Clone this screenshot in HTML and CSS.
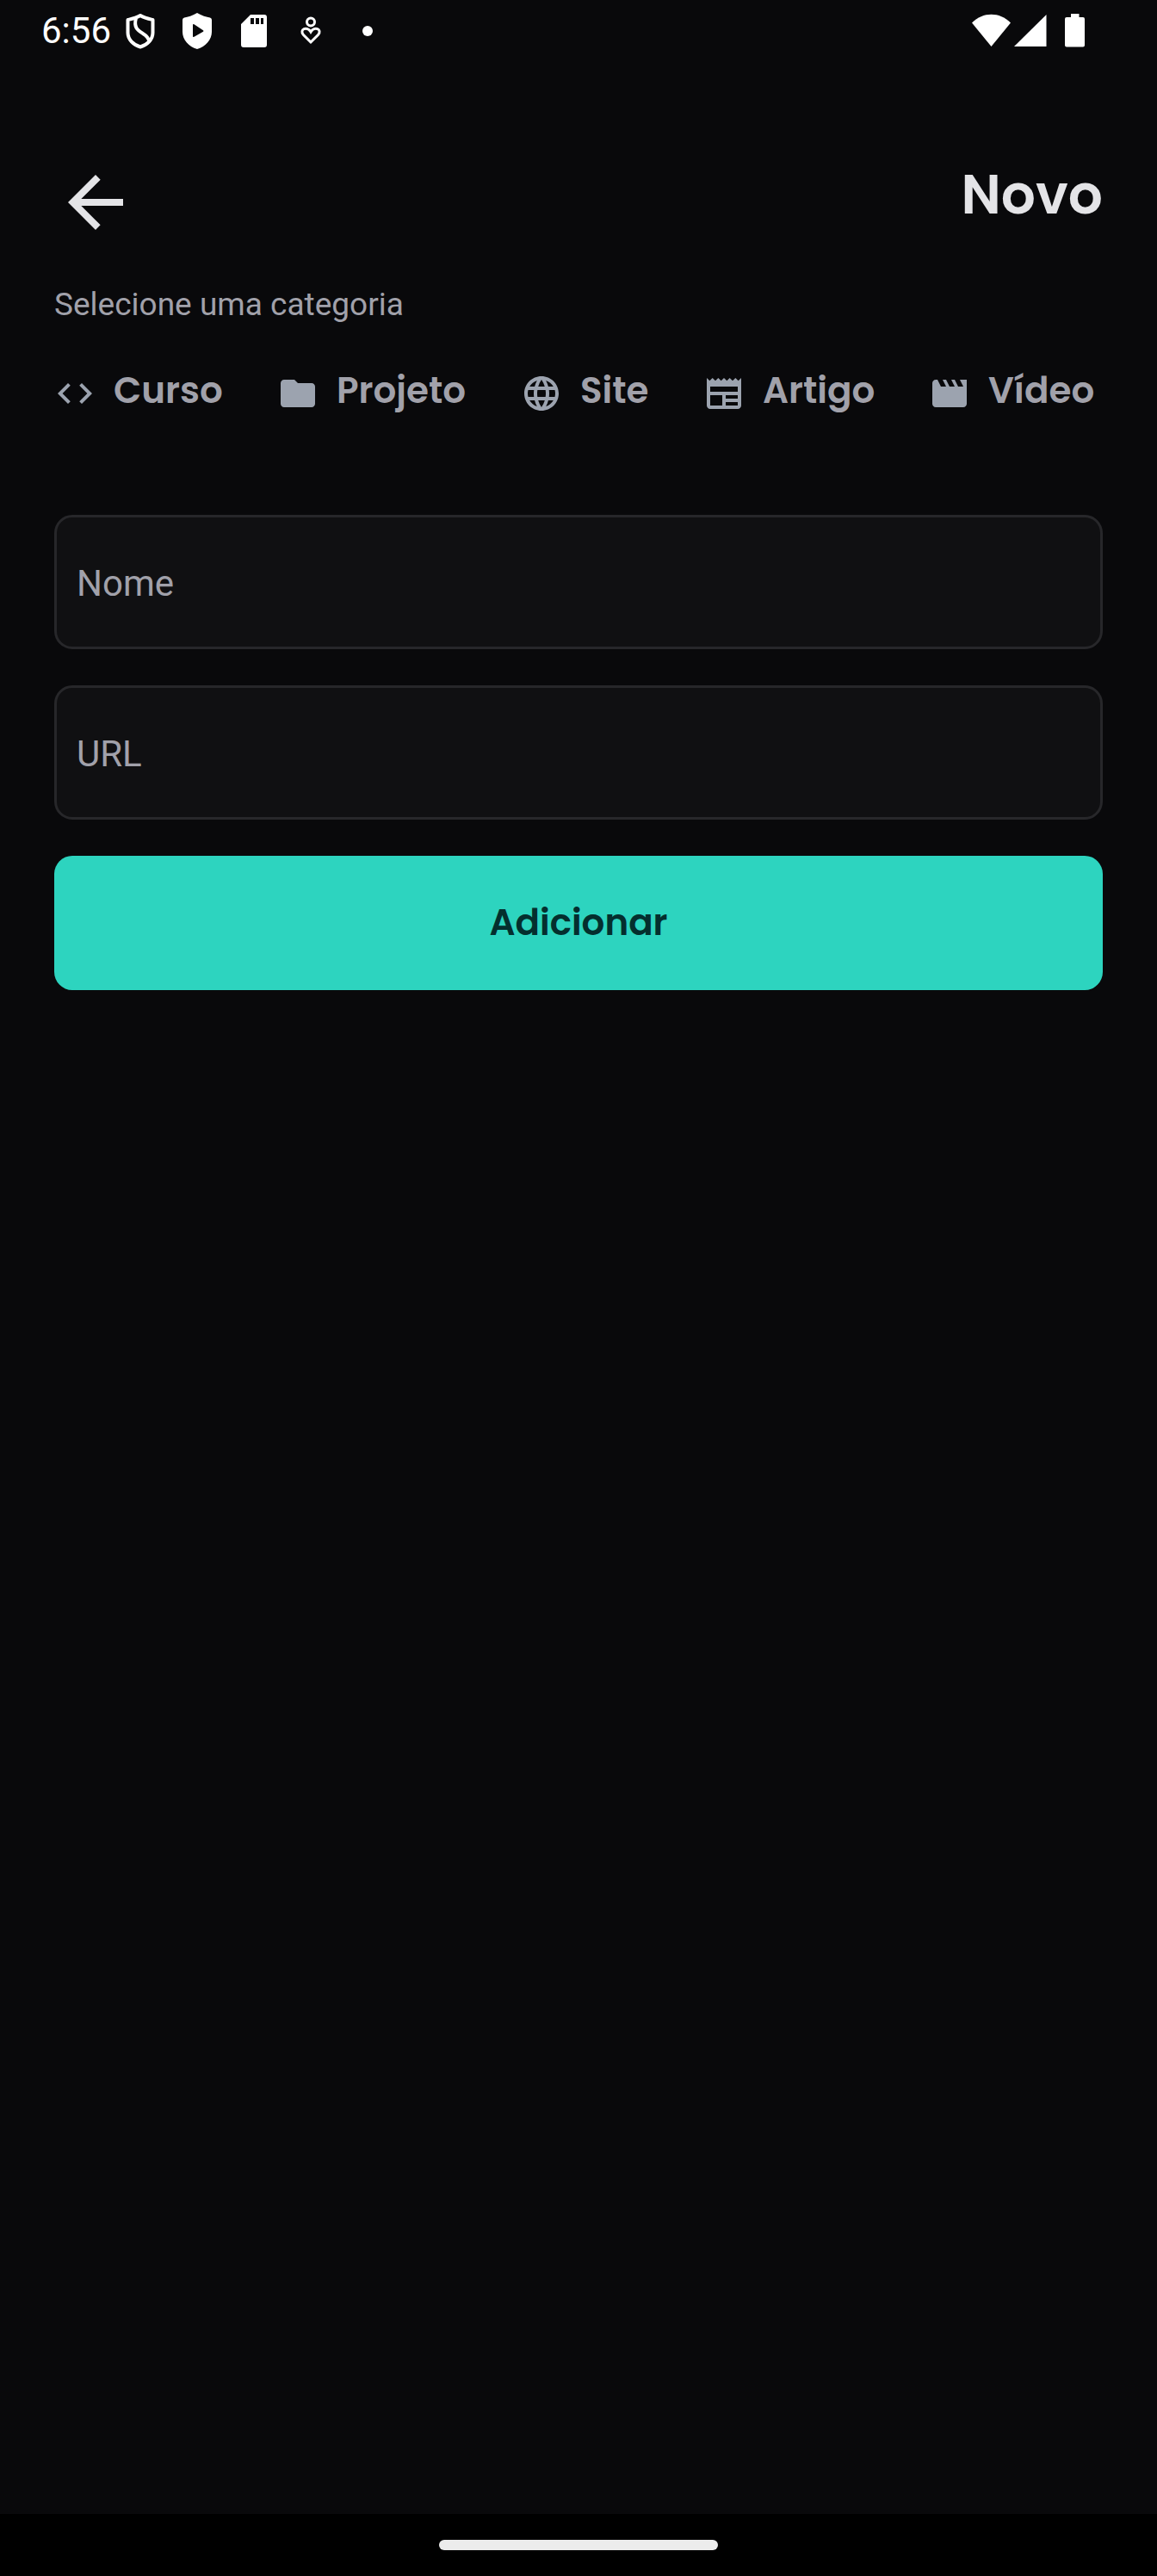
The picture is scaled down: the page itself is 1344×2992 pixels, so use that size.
FILE: index.html
```html
<!DOCTYPE html>
<html lang="pt-BR">
<head>
<meta charset="utf-8">
<meta name="viewport" content="width=device-width, initial-scale=1">
<title>Novo</title>
<link rel="stylesheet" href="styles.css">
</head>
<body>
<div class="status">
  <div class="status-left">
    <time class="clock">6:56</time>
    <div class="status-icons">
      <svg class="icon" viewBox="0 0 48 48" fill="none" stroke="#fff" stroke-width="4" stroke-linejoin="round"><path d="M24 6C19 9 14 10 9.500 11V26C9.500 34 16 40 24 42.500C32 40 38.500 34 38.500 26V11C34 10 29 9 24 6Z"/><path d="M19 9C16 20 21 23 27 27C32 30 34 33 34.500 37"/></svg>
      <svg class="icon" viewBox="0 0 48 48"><path fill="#fff" d="M24 3C19 6 13 8 9 8.500Q7 9 7 11V25C7 34 14 42 24 45C34 42 41 34 41 25V11Q41 9 39 8.500C35 8 29 6 24 3Z"/><path fill="#09090b" d="M19 17V30Q19 31.500 20.500 30.700L31 24.700Q32 24 31 23.200L20.500 16.300Q19 15.500 19 17Z"/></svg>
      <svg class="icon" viewBox="0 0 48 48"><path fill="#fff" fill-rule="evenodd" d="M20 5H36Q39 5 39 8V40Q39 43 36 43H12Q9 43 9 40V16ZM20 9V16H24V9ZM26 9V16H30V9ZM32 9V16H35V9Z"/></svg>
      <svg class="icon" viewBox="0 0 48 48" fill="none" stroke="#fff" stroke-width="3"><circle cx="24" cy="13.500" r="4.500"/><path d="M24 37L15.500 28.500C10 22 20 18 24 25C28 18 38 22 32.500 28.500Z"/></svg>
      <svg class="icon" viewBox="0 0 48 48"><circle cx="24" cy="24" r="6" fill="#fff"/></svg>
    </div>
  </div>
  <svg class="signals" viewBox="0 0 132 48" fill="#fff"><path d="M1 14.500C14 1.500 33 1.500 46 14.500L23.500 42Z"/><path d="M50 42L87.500 5V42Z"/><path d="M116 4H125.500V8H130Q132 8 132 10V40.500Q132 42.500 130 42.500H111Q109 42.500 109 40.500V10Q109 8 111 8H116Z"/></svg>
</div>

<main class="screen">
  <header class="header">
    <button class="back" type="button" aria-label="Voltar">
      <svg viewBox="0 0 24 24"><path d="M20 11H7.830l5.590-5.590L12 4l-8 8 8 8 1.410-1.410L7.830 13H20z"/></svg>
    </button>
    <h1 class="title">Novo</h1>
  </header>

  <p class="hint">Selecione uma categoria</p>
  <div class="categories">
    <button class="category" type="button">
      <svg class="icon" viewBox="0 0 24 24"><path d="M9.400 16.600 4.800 12l4.600-4.600L8 6l-6 6 6 6zm5.200 0 4.600-4.600-4.600-4.600L16 6l6 6-6 6z"/></svg>Curso</button>
    <button class="category" type="button">
      <svg class="icon" viewBox="0 0 24 24"><path d="M10 4H4c-1.100 0-1.990.9-1.990 2L2 18c0 1.100.9 2 2 2h16c1.100 0 2-.9 2-2V8c0-1.100-.9-2-2-2h-8z"/></svg>Projeto</button>
    <button class="category" type="button">
      <svg class="icon" viewBox="0 0 24 24"><path d="M11.990 2C6.470 2 2 6.480 2 12s4.470 10 9.990 10C17.520 22 22 17.520 22 12S17.520 2 11.990 2m6.930 6h-2.950c-.32-1.250-.78-2.450-1.380-3.560 1.840.63 3.370 1.910 4.330 3.560M12 4.040c.83 1.200 1.480 2.530 1.910 3.960h-3.820c.43-1.430 1.080-2.760 1.910-3.960M4.260 14C4.100 13.360 4 12.690 4 12s.1-1.360.26-2h3.380c-.08.66-.14 1.320-.14 2s.06 1.340.14 2zm.82 2h2.950c.32 1.250.78 2.450 1.380 3.560-1.840-.63-3.370-1.900-4.330-3.560m2.950-8H5.080c.96-1.660 2.490-2.930 4.330-3.560C8.810 5.550 8.350 6.750 8.030 8M12 19.960c-.83-1.200-1.480-2.530-1.910-3.960h3.820c-.43 1.430-1.080 2.760-1.910 3.960M14.340 14H9.660c-.09-.66-.16-1.320-.16-2s.07-1.350.16-2h4.680c.09.65.16 1.320.16 2s-.07 1.340-.16 2m.25 5.560c.6-1.110 1.060-2.310 1.380-3.560h2.950c-.96 1.650-2.490 2.930-4.330 3.560M16.360 14c.08-.66.14-1.320.14-2s-.06-1.340-.14-2h3.380c.16.64.26 1.310.26 2s-.1 1.360-.26 2z"/></svg>Site</button>
    <button class="category" type="button">
      <svg class="icon" viewBox="0 0 24 24"><path d="m22 3-1.670 1.670L18.670 3 17 4.670 15.330 3l-1.660 1.670L12 3l-1.670 1.670L8.670 3 7 4.670 5.330 3 3.670 4.670 2 3v16c0 1.100.9 2 2 2h16c1.100 0 2-.9 2-2zM11 19H4v-6h7zm9 0h-7v-2h7zm0-4h-7v-2h7zm0-4H4V8h16z"/></svg>Artigo</button>
    <button class="category" type="button">
      <svg class="icon" viewBox="0 0 24 24"><path d="m18 4 2 4h-3l-2-4h-2l2 4h-3l-2-4H8l2 4H7L5 4H4c-1.100 0-1.990.9-1.990 2L2 18c0 1.100.9 2 2 2h16c1.100 0 2-.9 2-2V4z"/></svg>Vídeo</button>
  </div>

  <form class="form">
    <input class="field" type="text" name="nome" placeholder="Nome" aria-label="Nome">
    <input class="field" type="url" name="url" placeholder="URL" aria-label="URL">
    <button class="submit" type="button">Adicionar</button>
  </form>
</main>

<div class="navbar"><div class="pill"></div></div>
</body>
</html>
```
FILE: styles.css
```css
* {
  box-sizing: border-box;
}

body {
  margin: 0;
  min-height: 100vh;
  display: flex;
  flex-direction: column;
  background: #09090b;
  color: #a1a1aa;
  font-family: Roboto, sans-serif;
}

button {
  padding: 0;
  border: 0;
  background: none;
  cursor: pointer;
}

.icon {
  width: 48px;
  height: 48px;
  flex: none;
  display: block;
}

.status {
  height: 72px;
  padding: 0 84px 0 48px;
  display: flex;
  align-items: center;
  justify-content: space-between;
}

.status-left {
  display: flex;
  align-items: center;
  gap: 10px;
}

.clock {
  color: #fff;
  font-size: 42px;
  line-height: 48px;
}

.status-icons {
  display: flex;
  gap: 18px;
}

.signals {
  width: 132px;
  height: 48px;
}

.screen {
  flex: 1;
  padding: 115px 63px 42px;
}

.header {
  display: flex;
  align-items: flex-start;
  justify-content: space-between;
}

.back svg {
  display: block;
  width: 96px;
  height: 96px;
  fill: #e4e4e7;
}

.title {
  margin: 0;
  color: #e4e4e7;
  font: 600 63px/78px Poppins, Inter, sans-serif;
}

.hint {
  margin: 42px 0 50px;
  font-size: 37px;
  line-height: 58px;
}

.categories {
  display: grid;
  grid-template-columns: 259fr 283fr 212fr 262fr 202fr;
}

.category {
  min-width: 0;
  display: flex;
  align-items: flex-start;
  gap: 21px;
  color: #a1a1aa;
  font: 600 42px/42px Poppins, Inter, sans-serif;
}

.category .icon {
  fill: #9ca3af;
}

.form {
  margin-top: 117px;
  display: flex;
  flex-direction: column;
  gap: 42px;
}

.field,
.submit {
  width: 100%;
  height: 156px;
  border-radius: 21px;
}

.field {
  padding: 2px 23px 0;
  border: 3px solid #27272a;
  background: #101012;
  color: #e4e4e7;
  font: 42px/48px Roboto, sans-serif;
}

.field::placeholder {
  color: #a1a1aa;
  opacity: 1;
}

.submit {
  background: #2dd4bf;
  color: #042f2e;
  font: 600 42px/48px Poppins, Inter, sans-serif;
}

.navbar {
  height: 72px;
  display: flex;
  align-items: center;
  justify-content: center;
  background: #000;
}

.pill {
  width: 324px;
  height: 12px;
  border-radius: 6px;
  background: #ececec;
}
```
